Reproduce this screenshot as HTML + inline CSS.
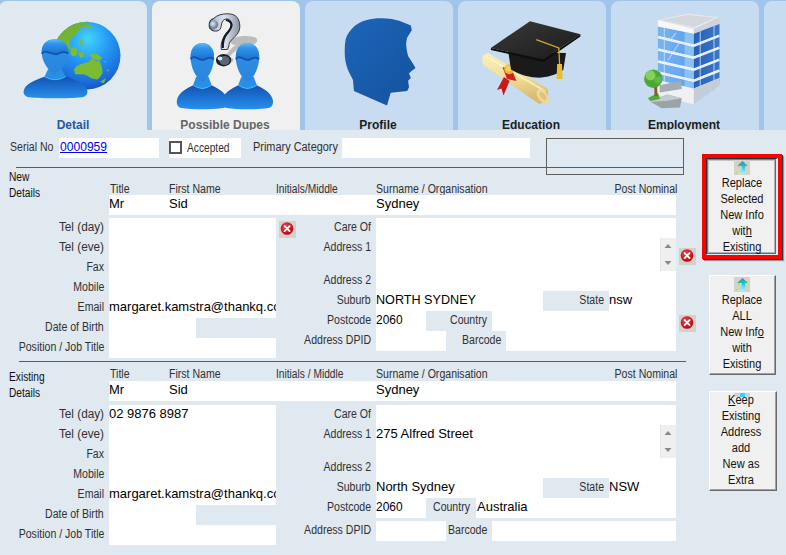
<!DOCTYPE html>
<html><head><meta charset="utf-8"><style>
html,body{margin:0;padding:0;width:786px;height:555px;overflow:hidden;background:#e0e8f0}
.b{position:absolute}
.t{position:absolute;white-space:pre;line-height:20px;font-family:"Liberation Sans",sans-serif}
.l{font-size:12px;color:#303030}
.l2{font-size:12px;color:#111}
.v{font-size:13px;color:#000000}
.tb{font-size:12px;font-weight:bold}
.bt{font-size:12px;color:#111}
.btn{background:#f0f0f0;box-sizing:border-box;border-top:1px solid #fff;border-left:1px solid #fff;border-right:1px solid #696969;border-bottom:1px solid #696969;box-shadow:inset -1px -1px 0 #a0a0a0}
</style></head><body>
<div class="b" style="left:0px;top:0px;width:786px;height:130px;background:#9fc5ea;"></div>
<div class="b" style="left:-1px;top:1px;width:148px;height:129px;background:#e0e8f0;border-radius:8px 8px 0 0"></div>
<div class="b" style="left:152px;top:1px;width:148px;height:129px;background:#f0f0f0;border-radius:8px 8px 0 0"></div>
<div class="b" style="left:305px;top:1px;width:148px;height:129px;background:#c7dcf1;border-radius:8px 8px 0 0"></div>
<div class="b" style="left:458px;top:1px;width:148px;height:129px;background:#c7dcf1;border-radius:8px 8px 0 0"></div>
<div class="b" style="left:611px;top:1px;width:148px;height:129px;background:#c7dcf1;border-radius:8px 8px 0 0"></div>
<div class="b" style="left:764px;top:1px;width:148px;height:129px;background:#c7dcf1;border-radius:8px 8px 0 0"></div>
<svg class="b" style="left:0;top:0" width="786" height="130" viewBox="0 0 786 130">
<defs>
<radialGradient id="globeG" cx="0.5" cy="0.28" r="0.75" fx="0.52" fy="0.25">
<stop offset="0" stop-color="#42d4fc"/><stop offset="0.45" stop-color="#2496f2"/><stop offset="0.85" stop-color="#1a68d8"/><stop offset="1" stop-color="#1450b0"/>
</radialGradient>
<clipPath id="globeC"><circle cx="86.7" cy="55.6" r="33.8"/></clipPath>
<linearGradient id="landG" x1="0" y1="0" x2="0.6" y2="1">
<stop offset="0" stop-color="#5c9e2c"/><stop offset="0.5" stop-color="#72b232"/><stop offset="1" stop-color="#7cbc34"/>
</linearGradient>
<linearGradient id="headG" x1="0" y1="0" x2="0" y2="1">
<stop offset="0" stop-color="#60bdf6"/><stop offset="0.3" stop-color="#2f95ea"/><stop offset="1" stop-color="#1a6fd0"/>
</linearGradient>
<linearGradient id="faceG" x1="0" y1="0" x2="0" y2="1">
<stop offset="0" stop-color="#2c8ee6"/><stop offset="1" stop-color="#2a86dc"/>
</linearGradient>
<linearGradient id="shG" x1="0" y1="0" x2="0" y2="1">
<stop offset="0" stop-color="#1552b0"/><stop offset="0.55" stop-color="#1d74d4"/><stop offset="1" stop-color="#2a90ea"/>
</linearGradient>
<linearGradient id="qG" x1="0" y1="0" x2="1" y2="0">
<stop offset="0" stop-color="#3a4250"/><stop offset="0.2" stop-color="#b8c4d4"/><stop offset="0.5" stop-color="#dfe4ec"/><stop offset="0.75" stop-color="#b4bcc8"/><stop offset="1" stop-color="#8a92a0"/>
</linearGradient>
<linearGradient id="qG2" x1="0" y1="0" x2="1" y2="0.2">
<stop offset="0" stop-color="#e8f0f8"/><stop offset="0.45" stop-color="#d0d6e0"/><stop offset="0.7" stop-color="#a0a8b8"/><stop offset="1" stop-color="#c8ccd6"/>
</linearGradient>
<radialGradient id="qB" cx="0.35" cy="0.4" r="0.6"><stop offset="0" stop-color="#d8f0ff"/><stop offset="1" stop-color="#6a7890"/></radialGradient>
<linearGradient id="profG" x1="0" y1="0" x2="1" y2="1">
<stop offset="0" stop-color="#1d66b8"/><stop offset="1" stop-color="#14519e"/>
</linearGradient>
<linearGradient id="scrollG" x1="0" y1="0" x2="0.25" y2="1">
<stop offset="0" stop-color="#fcf0b8"/><stop offset="0.6" stop-color="#f0dc94"/><stop offset="1" stop-color="#d8bc70"/>
</linearGradient>
<linearGradient id="bldL" x1="0" y1="0" x2="1" y2="0">
<stop offset="0" stop-color="#7ab4ec"/><stop offset="0.5" stop-color="#6aaaf0"/><stop offset="1" stop-color="#5aa0ea"/>
</linearGradient>
<linearGradient id="bldR" x1="0" y1="0" x2="1" y2="0">
<stop offset="0" stop-color="#2860b8"/><stop offset="1" stop-color="#3a78c8"/>
</linearGradient>
<linearGradient id="capG" x1="0" y1="0" x2="1" y2="1">
<stop offset="0" stop-color="#3a3a3a"/><stop offset="1" stop-color="#1a1a1a"/>
</linearGradient>
<path id="sh" d="M-10 37.5 C-17 40 -26 44 -28.5 50 C-30 54 -28 57.5 -24 58 C-12 59.5 12 59.5 24 58 C28 57.5 30 54 28.5 50 C26 44 17 40 10 37.5 Q0 42 -10 37.5 Z" fill="url(#shG)"/>
<g id="hd">
<path d="M-7 30 L7 30 L10.5 37.5 Q0 43.5 -10.5 37.5 Z" fill="#2a8ee6"/>
<path d="M-10.5 37.5 Q0 43.5 10.5 37.5" fill="none" stroke="#3cc4fa" stroke-width="0.9"/>
<path d="M0 0 C7.5 0 13.3 4.5 13.3 12.5 C13.3 22 7.5 31 0 35 C-7.5 31 -13.3 22 -13.3 12.5 C-13.3 4.5 -7.5 0 0 0 Z" fill="url(#faceG)"/>
<path d="M0 0 C7.5 0 13.3 4.5 13.3 12.5 L13.3 14.5 C10 12 6 13 3 14.5 C0 16 -4 14 -7 13 C-10 12 -12 13 -13.3 14.5 L-13.3 12.5 C-13.3 4.5 -7.5 0 0 0 Z" fill="url(#headG)"/>
<path d="M-13.3 14.5 C-12 13 -10 12 -7 13 C-4 14 0 16 3 14.5 C6 13 10 12 13.3 14.5" fill="none" stroke="#1550a8" stroke-width="1.6"/>
</g>
</defs>

<!-- ===== Icon 1: globe + person ===== -->
<circle cx="86.7" cy="55.6" r="33.8" fill="url(#globeG)"/>
<g clip-path="url(#globeC)">
<path d="M40 20 L91 15 L91.5 21.5 L86 23 L82 27.5 L80 28 L78.5 31.5 L74 35.5 L71 38.5 L69.5 43 L70.5 47 L67.3 51.4 L55 56 L40 56 Z" fill="url(#landG)"/>
<path d="M83 26.5 L87 24.5 L92 25 L90 28.5 L86 28 Z M80.5 30 L82.5 29 L82 32 Z" fill="#78b834"/>
<path d="M70.5 48 L75 47 L77.5 50 L77 55 L73 56.5 L70.5 54 Z M78.5 52 L83 52 L84 56.5 L80 58 Z M89.7 54.5 L96 53.6 L102 57.5 L100 60.5 L93 59.5 Z M80 39 L82.5 38.5 L83 45 L81 46 Z M104 61 L106 61 L106 63 Z M107 70 L109 69 L108 72 Z M100 82 L106 78 L104 83 Z" fill="#7cbc34"/>
<path d="M74 69.4 C76 66 79 64.5 81.5 63.9 L89 61.8 L91.1 59.1 L94 60 L97.3 61.8 L98.6 59.1 C101 64 102.5 69 102.7 72.8 C101 76 99 78.5 97.3 79.6 L91.1 78.3 C88 76 86 74.5 83.6 74.2 L75.3 74.2 Z" fill="#7cbc34"/>
<path d="M53 62 A34 34 0 0 0 120 60 A33.8 33.8 0 0 1 53 62 Z" fill="#1450b0" opacity="0.35"/>
</g>
<use href="#sh" transform="translate(55.5 39.2) scale(1.1 1)"/><use href="#hd" transform="translate(55 39.2)"/>

<!-- ===== Icon 2: two persons + question ===== -->
<path d="M231 40 C235 36 246 35 254 37 C259 38.5 258 43 253 44.5 C248 46 243 45 240 47 C236 50 233 53 230 56 L226 55 C229 51 232 47 236 45 C232 45 229 42 231 40 Z M228 58 C231 57 235 58 233 61 C231 63 227 63 228 58 Z" fill="#bcbcbc"/>
<path d="M209.2 24.1 C209.5 20.5 211 19 213.8 18.4 C217 15 222 13.8 227.7 13.8 C232 13.8 235 15 236.9 17.2 C239 19.5 239.8 23 239.8 26.4 C239.8 30 238.5 32.5 236.9 34.5 C235 37 233 38.5 231.1 40.3 C229.8 42 229 44 228.8 46 L227.7 49.5 L221.3 49.5 C221 46 221.2 43.5 221.9 41.4 C222.8 38.5 224 36.5 225.4 34.5 C227 32 229 30.5 230 28.7 C231 26.5 231.5 24.5 231.1 23 C230.5 20.5 229.5 19.3 227.7 19 C225.5 18.8 224 19.5 223 20.7 C222 22 221.5 23.5 221.3 25.3 C221 27.5 220.5 29 219.6 29.9 C218 31 216 31.3 213.8 31 C211 30.3 209.3 28.5 209.2 26.4 Z" fill="url(#qG)" stroke="#202632" stroke-width="0.9"/>
<path d="M226 20 C229 20.5 231 22 231.5 24.5 C232 28 229 31 226.5 34 C224 37 222.5 41 222.8 48" fill="none" stroke="#141820" stroke-width="2.2"/>
<circle cx="214" cy="24.5" r="4.2" fill="url(#qB)"/>
<ellipse cx="223.6" cy="60.2" rx="7.6" ry="6.2" fill="#1a1e28"/><ellipse cx="224.5" cy="60.5" rx="5.2" ry="4.6" fill="#5e6676"/><ellipse cx="220" cy="58.6" rx="2.4" ry="2" fill="#c8e8ff"/>
<use href="#sh" transform="translate(202.3 43.1) scale(0.88 1.12)"/><use href="#hd" transform="translate(202.3 43.1) scale(0.88 1.12)"/>
<use href="#sh" transform="translate(247.5 43.1) scale(0.88 1.12)"/><use href="#hd" transform="translate(247.5 43.1) scale(0.88 1.12)"/>

<!-- ===== Icon 3: profile head ===== -->
<path d="M381.5 18.3 C389 18.5 395 19.5 399.9 21 L410.9 25.6 L411.8 30.2 L407.2 37.6 C406.3 41 406 44 406.3 46.8 C406.8 50 407.2 53 408.1 56 L412.7 63.3 L415.5 67.9 L410.9 71.6 L409 73.4 L410.9 78 L408.1 80.8 L409 87.2 L407.2 90.9 L390.7 92.7 L387 105.6 L353.9 90.9 L353 79.9 C351 76 349 72.5 347.5 68.8 C345.5 63 344.7 58 344.7 52.3 C344.7 47 345 43 345.6 39.4 C347 34.5 349.5 31 352.1 28.4 C356 24.5 361 21.5 366.8 20.1 C371.5 18.8 376.5 18.2 381.5 18.3 Z" fill="url(#profG)"/>
<!-- ===== Icon 4: mortarboard + diploma ===== -->
<path d="M484.9 54.5 C482 55.5 481.8 60 482.5 62 C483.5 65 485 67 486.9 67.3 L538.4 103.5 C541.5 104.5 546.5 101 547.8 96 C548.5 92 548 89.5 547.3 88.6 L488.9 53.5 C487.5 53 486 53.8 484.9 54.5 Z" fill="url(#scrollG)"/>
<path d="M487 57 L545 91" stroke="#fff8d8" stroke-width="2" opacity="0.7"/>
<ellipse cx="542.6" cy="96" rx="5" ry="8" fill="#ecd898" transform="rotate(-35 542.6 96)"/>
<ellipse cx="543" cy="96" rx="2.5" ry="4.5" fill="#e0c47c" transform="rotate(-35 543 96)"/>
<path d="M502.5 67 L512 70 L516.5 81 L507 79 Z" fill="#d42020"/>
<path d="M504 77 L497 90 L501.5 88.5 L503.5 95.5 L509.5 81 Z" fill="#c81818"/>
<circle cx="509.2" cy="69.3" r="5" fill="#e8b838"/>
<circle cx="508.5" cy="68.5" r="3" fill="#f4d060"/>
<path d="M508.3 52 L566 53 L563.3 70 C556 75 546 78 536.3 77.6 C526 77 517 73 511 69.5 Z" fill="#1a1a1a"/>
<path d="M490.9 47.9 L530 21.2 L580.4 34.3 L543.5 59.6 Z" fill="url(#capG)"/>
<path d="M490.9 47.9 L543.5 59.6 L580.4 34.3 L580.4 36.5 L543.5 62 L490.9 50 Z" fill="#0e0e0e"/>
<path d="M536.3 39.7 L558.8 47.9 L559.7 66" fill="none" stroke="#d8a828" stroke-width="1.3"/>
<path d="M557.2 64 L562 64 L562.5 79 L556.5 79 Z" fill="#ecbc30"/>

<!-- ===== Icon 5: building ===== -->
<path d="M657.9 26 L693.8 33.5 L693.8 96 L657.9 88 Z" fill="url(#bldL)"/>
<path d="M693.8 33.5 L719.5 24 L719.5 84 L693.8 96 Z" fill="url(#bldR)"/>
<path d="M684.6 31.5 L693.8 33.5 L693.8 96 L684.6 94 Z" fill="#9cd0f4" opacity="0.7"/>
<g stroke="#cfe4f8" stroke-width="0.9" opacity="0.9">
<path d="M664.3 27.5 L664.3 89"/><path d="M700.2 31 L700.2 93"/><path d="M714 26 L714 87"/>
</g>
<path d="M670 40 L676 33 M668 60 L680 42" stroke="#d8ecff" stroke-width="1.2" opacity="0.6"/>
<g stroke="#f4f8fc" stroke-width="2.6" fill="none">
<path d="M657.9 37 L693.8 45.7 L719.5 35.6"/><path d="M657.9 49.4 L693.8 57.7 L719.5 47.6"/><path d="M657.9 61.4 L693.8 69.6 L719.5 59.6"/><path d="M657.9 72.4 L693.8 80.7 L719.5 70.5"/>
</g>
<g stroke="#6a9ee0" stroke-width="0.6" stroke-dasharray="1.5 1.5" fill="none" opacity="0.5">
<path d="M657.9 37 L693.8 45.7 L719.5 35.6"/><path d="M657.9 49.4 L693.8 57.7 L719.5 47.6"/><path d="M657.9 61.4 L693.8 69.6 L719.5 59.6"/><path d="M657.9 72.4 L693.8 80.7 L719.5 70.5"/>
</g>
<path d="M657.9 80 L693.8 88.5 L719.5 78 L719.5 86 L693.8 104.6 L657.9 95 Z" fill="#eef0f4"/>
<path d="M693.8 88.5 L719.5 78 L719.5 86 L693.8 104.6 Z" fill="#c8ccd4"/>
<path d="M700 92 L700 99 M707 88.5 L707 95.5 M714 85 L714 91" stroke="#a8d4f4" stroke-width="1.6"/>
<path d="M657.9 20 L687.3 13.5 L719.5 17.2 L693.8 29.2 Z" fill="#e4e6ea"/>
<path d="M661 20.3 L687.3 15 L715 17.8 L693.8 27 Z" fill="#d4d8dc"/>
<path d="M657.9 20 L693.8 29.2 L693.8 33.8 L657.9 26.4 Z" fill="#f8f8fa"/>
<path d="M693.8 29.2 L719.5 17.2 L719.5 23 L693.8 33.8 Z" fill="#d0d4da"/>
<path d="M659.7 85.3 L680.9 80.7 L681.8 89 L659.7 92.6 Z" fill="#a4acb4"/>
<path d="M650.5 101.8 L667 94.5 L681.8 98.2 L680 107.4 L661.6 108.3 Z" fill="#9aa2aa"/>
<path d="M650.5 101.8 L667 94.5 L681.8 98.2 L666 101 Z" fill="#c4cad0"/>
<path d="M648 98 L658 93 L660 99 L650 101 Z" fill="#58a838"/>
<path d="M654.2 85 L656.8 85 L657.5 96 L654.5 96 Z" fill="#8a5a28"/>
<circle cx="653.3" cy="78.8" r="9.2" fill="#4aa838"/>
<circle cx="650.5" cy="75.5" r="5" fill="#86d060"/>
<circle cx="658" cy="80" r="3.5" fill="#62b848"/>
</svg>

<div class="t tb" style="left:-27px;width:200px;top:115px;text-align:center;transform-origin:50% 0;color:#2459a6">Detail</div>
<div class="t tb" style="left:125px;width:200px;top:115px;text-align:center;transform-origin:50% 0;color:#666666">Possible Dupes</div>
<div class="t tb" style="left:278px;width:200px;top:115px;text-align:center;transform-origin:50% 0;color:#1c1c1c">Profile</div>
<div class="t tb" style="left:431px;width:200px;top:115px;text-align:center;transform-origin:50% 0;color:#1c1c1c">Education</div>
<div class="t tb" style="left:584px;width:200px;top:115px;text-align:center;transform-origin:50% 0;color:#1c1c1c">Employment</div>
<div class="b" style="left:0px;top:130px;width:786px;height:425px;background:#e0e8f0;"></div>
<div class="t l" style="left:10px;top:137px;transform-origin:0 0;transform:scaleX(0.88);">Serial No</div>
<div class="b" style="left:59px;top:138px;width:100px;height:20px;background:#fff;"></div>
<div class="t v" style="left:60px;top:137px;transform-origin:0 0;transform:scaleX(0.93);color:#0000ee"><u>0000959</u></div>
<div class="b" style="left:169px;top:138px;width:72px;height:20px;background:#fff;"></div>
<div class="b" style="left:169px;top:141px;width:13px;height:13px;border:2px solid #555;box-sizing:border-box;background:#fff"></div>
<div class="t l" style="left:187px;top:138px;transform-origin:0 0;transform:scaleX(0.85);">Accepted</div>
<div class="t l" style="left:253px;top:137px;transform-origin:0 0;transform:scaleX(0.91);">Primary Category</div>
<div class="b" style="left:342px;top:138px;width:188px;height:20px;background:#fff;"></div>
<div class="b" style="left:546px;top:138px;width:138px;height:37px;border:1px solid #5f5f5f;box-sizing:border-box"></div>
<div class="b" style="left:16px;top:167px;width:668px;height:1px;background:#5c5c5c;"></div>
<div class="t l2" style="left:9px;top:167px;transform-origin:0 0;transform:scaleX(0.85);">New</div>
<div class="t l2" style="left:9px;top:183px;transform-origin:0 0;transform:scaleX(0.85);">Details</div>
<div class="t l" style="left:110px;top:179px;transform-origin:0 0;transform:scaleX(0.88);">Title</div>
<div class="t l" style="left:169px;top:179px;transform-origin:0 0;transform:scaleX(0.88);">First Name</div>
<div class="t l" style="left:276px;top:179px;transform-origin:0 0;transform:scaleX(0.85);">Initials/Middle</div>
<div class="t l" style="left:376px;top:179px;transform-origin:0 0;transform:scaleX(0.88);">Surname / Organisation</div>
<div class="t l" style="right:109px;top:179px;text-align:right;transform-origin:100% 0;transform:scaleX(0.88);">Post Nominal</div>
<div class="b" style="left:109px;top:195px;width:567px;height:20px;background:#fff;"></div>
<div class="t v" style="left:109px;top:194px;transform-origin:0 0;">Mr</div>
<div class="t v" style="left:169px;top:194px;transform-origin:0 0;">Sid</div>
<div class="t v" style="left:376px;top:194px;transform-origin:0 0;">Sydney</div>
<div class="b" style="left:109px;top:218px;width:167px;height:140px;background:#fff;"></div>
<div class="b" style="left:196px;top:318px;width:80px;height:20px;background:#e0e8f0;"></div>
<div class="t l" style="right:682px;top:217px;text-align:right;transform-origin:100% 0;transform:scaleX(0.98);">Tel (day)</div>
<div class="t l" style="right:682px;top:237px;text-align:right;transform-origin:100% 0;transform:scaleX(0.98);">Tel (eve)</div>
<div class="t l" style="right:682px;top:257px;text-align:right;transform-origin:100% 0;transform:scaleX(0.88);">Fax</div>
<div class="t l" style="right:682px;top:277px;text-align:right;transform-origin:100% 0;transform:scaleX(0.88);">Mobile</div>
<div class="t l" style="right:682px;top:297px;text-align:right;transform-origin:100% 0;transform:scaleX(0.88);">Email</div>
<div class="t l" style="right:682px;top:317px;text-align:right;transform-origin:100% 0;transform:scaleX(0.88);">Date of Birth</div>
<div class="t l" style="right:682px;top:337px;text-align:right;transform-origin:100% 0;transform:scaleX(0.88);">Position / Job Title</div>
<div class="b" style="left:109px;top:218px;width:167px;height:140px;overflow:hidden"><div class="t v" style="left:0px;top:79px">margaret.kamstra@thankq.com</div></div>
<div class="t l" style="right:415px;top:217px;text-align:right;transform-origin:100% 0;transform:scaleX(0.88);">Care Of</div>
<div class="t l" style="right:415px;top:237px;text-align:right;transform-origin:100% 0;transform:scaleX(0.88);">Address 1</div>
<div class="t l" style="right:415px;top:270px;text-align:right;transform-origin:100% 0;transform:scaleX(0.88);">Address 2</div>
<div class="t l" style="right:415px;top:290px;text-align:right;transform-origin:100% 0;transform:scaleX(0.88);">Suburb</div>
<div class="t l" style="right:415px;top:310px;text-align:right;transform-origin:100% 0;transform:scaleX(0.88);">Postcode</div>
<div class="t l" style="right:415px;top:330px;text-align:right;transform-origin:100% 0;transform:scaleX(0.88);">Address DPID</div>
<div class="b" style="left:376px;top:218px;width:300px;height:133px;background:#fff;"></div>
<div class="b" style="left:543px;top:291px;width:66px;height:20px;background:#e0e8f0;"></div>
<div class="b" style="left:426px;top:311px;width:66px;height:20px;background:#e0e8f0;"></div>
<div class="b" style="left:446px;top:331px;width:60px;height:20px;background:#e0e8f0;"></div>
<div class="t l" style="right:182px;top:290px;text-align:right;transform-origin:100% 0;transform:scaleX(0.88);">State</div>
<div class="t l" style="left:450px;top:310px;transform-origin:0 0;transform:scaleX(0.88);">Country</div>
<div class="t l" style="left:462px;top:330px;transform-origin:0 0;transform:scaleX(0.88);">Barcode</div>
<div class="t v" style="left:376px;top:290px;transform-origin:0 0;transform:scaleX(0.97);">NORTH SYDNEY</div>
<div class="t v" style="left:376px;top:310px;transform-origin:0 0;transform:scaleX(0.92);">2060</div>
<div class="t v" style="left:609px;top:290px;transform-origin:0 0;">nsw</div>
<div class="b" style="left:660px;top:238px;width:16px;height:33px;background:#efefef;border-left:1px solid #e6e6e6;box-sizing:border-box"></div><svg class="b" style="left:660px;top:238px" width="16" height="33" viewBox="0 0 16 33"><path d="M4.5 10 L8 6 L11.5 10 Z" fill="#8a8a8a"/><path d="M4.5 23 L8 27 L11.5 23 Z" fill="#8a8a8a"/></svg>
<div class="b" style="left:279px;top:221px;width:17px;height:17px;background:#d5d1c9"></div><svg class="b" style="left:279px;top:221px" width="17" height="17" viewBox="0 0 17 17"><defs><radialGradient id="rg279221" cx="0.4" cy="0.35" r="0.7"><stop offset="0" stop-color="#f04048"/><stop offset="1" stop-color="#b80010"/></radialGradient></defs><circle cx="8" cy="7.5" r="6.3" fill="url(#rg279221)"/><path d="M5.6 5.1 L10.6 10.1 M10.6 5.1 L5.6 10.1" stroke="#fff" stroke-width="1.9" stroke-linecap="round"/></svg>
<div class="b" style="left:679px;top:248px;width:17px;height:17px;background:#d5d1c9"></div><svg class="b" style="left:679px;top:248px" width="17" height="17" viewBox="0 0 17 17"><defs><radialGradient id="rg679248" cx="0.4" cy="0.35" r="0.7"><stop offset="0" stop-color="#f04048"/><stop offset="1" stop-color="#b80010"/></radialGradient></defs><circle cx="8" cy="7.5" r="6.3" fill="url(#rg679248)"/><path d="M5.6 5.1 L10.6 10.1 M10.6 5.1 L5.6 10.1" stroke="#fff" stroke-width="1.9" stroke-linecap="round"/></svg>
<div class="b" style="left:679px;top:315px;width:17px;height:17px;background:#d5d1c9"></div><svg class="b" style="left:679px;top:315px" width="17" height="17" viewBox="0 0 17 17"><defs><radialGradient id="rg679315" cx="0.4" cy="0.35" r="0.7"><stop offset="0" stop-color="#f04048"/><stop offset="1" stop-color="#b80010"/></radialGradient></defs><circle cx="8" cy="7.5" r="6.3" fill="url(#rg679315)"/><path d="M5.6 5.1 L10.6 10.1 M10.6 5.1 L5.6 10.1" stroke="#fff" stroke-width="1.9" stroke-linecap="round"/></svg>
<div class="b" style="left:19px;top:361px;width:667px;height:1px;background:#5c5c5c;"></div>
<div class="t l2" style="left:9px;top:367px;transform-origin:0 0;transform:scaleX(0.85);">Existing</div>
<div class="t l2" style="left:9px;top:383px;transform-origin:0 0;transform:scaleX(0.85);">Details</div>
<div class="t l" style="left:110px;top:364px;transform-origin:0 0;transform:scaleX(0.88);">Title</div>
<div class="t l" style="left:169px;top:364px;transform-origin:0 0;transform:scaleX(0.88);">First Name</div>
<div class="t l" style="left:276px;top:364px;transform-origin:0 0;transform:scaleX(0.85);">Initials / Middle</div>
<div class="t l" style="left:376px;top:364px;transform-origin:0 0;transform:scaleX(0.88);">Surname / Organisation</div>
<div class="t l" style="right:109px;top:364px;text-align:right;transform-origin:100% 0;transform:scaleX(0.88);">Post Nominal</div>
<div class="b" style="left:109px;top:381px;width:567px;height:20px;background:#fff;"></div>
<div class="t v" style="left:109px;top:380px;transform-origin:0 0;">Mr</div>
<div class="t v" style="left:169px;top:380px;transform-origin:0 0;">Sid</div>
<div class="t v" style="left:376px;top:380px;transform-origin:0 0;">Sydney</div>
<div class="b" style="left:109px;top:405px;width:167px;height:140px;background:#fff;"></div>
<div class="b" style="left:196px;top:505px;width:80px;height:20px;background:#e0e8f0;"></div>
<div class="t l" style="right:682px;top:404px;text-align:right;transform-origin:100% 0;transform:scaleX(0.98);">Tel (day)</div>
<div class="t l" style="right:682px;top:424px;text-align:right;transform-origin:100% 0;transform:scaleX(0.98);">Tel (eve)</div>
<div class="t l" style="right:682px;top:444px;text-align:right;transform-origin:100% 0;transform:scaleX(0.88);">Fax</div>
<div class="t l" style="right:682px;top:464px;text-align:right;transform-origin:100% 0;transform:scaleX(0.88);">Mobile</div>
<div class="t l" style="right:682px;top:484px;text-align:right;transform-origin:100% 0;transform:scaleX(0.88);">Email</div>
<div class="t l" style="right:682px;top:504px;text-align:right;transform-origin:100% 0;transform:scaleX(0.88);">Date of Birth</div>
<div class="t l" style="right:682px;top:524px;text-align:right;transform-origin:100% 0;transform:scaleX(0.88);">Position / Job Title</div>
<div class="b" style="left:109px;top:405px;width:167px;height:140px;overflow:hidden"><div class="t v" style="left:0px;top:79px">margaret.kamstra@thankq.com</div><div class="t v" style="left:0px;top:-1px">02 9876 8987</div></div>
<div class="t l" style="right:415px;top:404px;text-align:right;transform-origin:100% 0;transform:scaleX(0.88);">Care Of</div>
<div class="t l" style="right:415px;top:424px;text-align:right;transform-origin:100% 0;transform:scaleX(0.88);">Address 1</div>
<div class="t l" style="right:415px;top:457px;text-align:right;transform-origin:100% 0;transform:scaleX(0.88);">Address 2</div>
<div class="t l" style="right:415px;top:477px;text-align:right;transform-origin:100% 0;transform:scaleX(0.88);">Suburb</div>
<div class="t l" style="right:415px;top:497px;text-align:right;transform-origin:100% 0;transform:scaleX(0.88);">Postcode</div>
<div class="t l" style="right:415px;top:520px;text-align:right;transform-origin:100% 0;transform:scaleX(0.88);">Address DPID</div>
<div class="b" style="left:376px;top:405px;width:300px;height:113px;background:#fff;"></div>
<div class="b" style="left:543px;top:478px;width:66px;height:20px;background:#e0e8f0;"></div>
<div class="b" style="left:426px;top:498px;width:50px;height:20px;background:#e0e8f0;"></div>
<div class="b" style="left:376px;top:521px;width:70px;height:20px;background:#fff;"></div>
<div class="b" style="left:492px;top:521px;width:184px;height:20px;background:#fff;"></div>
<div class="t l" style="right:182px;top:477px;text-align:right;transform-origin:100% 0;transform:scaleX(0.88);">State</div>
<div class="t l" style="left:433px;top:497px;transform-origin:0 0;transform:scaleX(0.88);">Country</div>
<div class="t l" style="left:448px;top:520px;transform-origin:0 0;transform:scaleX(0.88);">Barcode</div>
<div class="t v" style="left:376px;top:424px;transform-origin:0 0;">275 Alfred Street</div>
<div class="t v" style="left:376px;top:477px;transform-origin:0 0;">North Sydney</div>
<div class="t v" style="left:376px;top:497px;transform-origin:0 0;transform:scaleX(0.92);">2060</div>
<div class="t v" style="left:477px;top:497px;transform-origin:0 0;">Australia</div>
<div class="t v" style="left:609px;top:477px;transform-origin:0 0;">NSW</div>
<div class="b" style="left:660px;top:425px;width:16px;height:33px;background:#efefef;border-left:1px solid #e6e6e6;box-sizing:border-box"></div><svg class="b" style="left:660px;top:425px" width="16" height="33" viewBox="0 0 16 33"><path d="M4.5 10 L8 6 L11.5 10 Z" fill="#8a8a8a"/><path d="M4.5 23 L8 27 L11.5 23 Z" fill="#8a8a8a"/></svg>
<div class="b" style="left:702px;top:154px;width:80px;height:105px;background:#ff0000;box-shadow:1px 1px 0 #2b3b3b,2px 2px 1px rgba(0,0,0,.35)"></div>
<div class="b" style="left:706px;top:158px;width:72px;height:97px;background:#f0f0f0;border-left:1px solid #1e3535;border-top:1px solid #1e3535;border-right:2px solid #d8eef6;border-bottom:1px solid #d8eef6;box-sizing:border-box;box-shadow:inset 1px 1px 0 #7a7f80,inset -1px -1px 0 #6a6a6a,inset 2px 2px 0 #c4c4c4,inset -2px -2px 0 #b0b0b0"></div>
<div class="b" style="left:734px;top:160px;width:16px;height:15px;background:#d6d2ca"></div><svg class="b" style="left:734px;top:160px" width="16" height="15" viewBox="0 0 16 15"><defs><linearGradient id="arG" x1="0" y1="0" x2="0" y2="1"><stop offset="0" stop-color="#4a78ee"/><stop offset="0.35" stop-color="#22c49a"/><stop offset="0.6" stop-color="#3cd8ff"/><stop offset="1" stop-color="#b8f4ff"/></linearGradient></defs><path d="M8.5 1 L14 6 L11.2 6 L11.2 10 C11.2 13 9.5 14.2 6 14.2 C3.5 14.2 2 13.5 2 12.5 C3 13 5 13 6.5 12 C7.5 11.2 7.8 10.5 7.8 9.5 L7.8 6 L3 6 Z" fill="url(#arG)"/><circle cx="3" cy="12.8" r="1" fill="#c8e820"/><circle cx="5" cy="7" r="0.8" fill="#a0e040"/></svg>
<div class="t bt" style="left:642px;width:200px;top:173px;text-align:center;transform-origin:50% 0;transform:scaleX(0.92);">Replace</div>
<div class="t bt" style="left:642px;width:200px;top:189px;text-align:center;transform-origin:50% 0;transform:scaleX(0.92);">Selected</div>
<div class="t bt" style="left:642px;width:200px;top:205px;text-align:center;transform-origin:50% 0;transform:scaleX(0.92);">New Info</div>
<div class="t bt" style="left:642px;width:200px;top:221px;text-align:center;transform-origin:50% 0;transform:scaleX(0.92);">wit<u>h</u></div>
<div class="t bt" style="left:642px;width:200px;top:237px;text-align:center;transform-origin:50% 0;transform:scaleX(0.92);">Existing</div>
<div class="b btn" style="left:709px;top:275px;width:67px;height:100px"></div>
<div class="b" style="left:734px;top:277px;width:16px;height:15px;background:#d6d2ca"></div><svg class="b" style="left:734px;top:277px" width="16" height="15" viewBox="0 0 16 15"><defs><linearGradient id="arG277" x1="0" y1="0" x2="0" y2="1"><stop offset="0" stop-color="#4a78ee"/><stop offset="0.35" stop-color="#22c49a"/><stop offset="0.6" stop-color="#3cd8ff"/><stop offset="1" stop-color="#b8f4ff"/></linearGradient></defs><path d="M8.5 1 L14 6 L11.2 6 L11.2 10 C11.2 13 9.5 14.2 6 14.2 C3.5 14.2 2 13.5 2 12.5 C3 13 5 13 6.5 12 C7.5 11.2 7.8 10.5 7.8 9.5 L7.8 6 L3 6 Z" fill="url(#arG277)"/><circle cx="3" cy="12.8" r="1" fill="#c8e820"/><circle cx="5" cy="7" r="0.8" fill="#a0e040"/></svg>
<div class="t bt" style="left:642px;width:200px;top:290px;text-align:center;transform-origin:50% 0;transform:scaleX(0.92);">Replace</div>
<div class="t bt" style="left:642px;width:200px;top:306px;text-align:center;transform-origin:50% 0;transform:scaleX(0.92);">ALL</div>
<div class="t bt" style="left:642px;width:200px;top:322px;text-align:center;transform-origin:50% 0;transform:scaleX(0.92);">New Inf<u>o</u></div>
<div class="t bt" style="left:642px;width:200px;top:338px;text-align:center;transform-origin:50% 0;transform:scaleX(0.92);">with</div>
<div class="t bt" style="left:642px;width:200px;top:354px;text-align:center;transform-origin:50% 0;transform:scaleX(0.92);">Existing</div>
<div class="b btn" style="left:709px;top:391px;width:68px;height:100px"></div>
<div class="b" style="left:734px;top:393px;width:16px;height:4px;background:#d6d2ca"></div><div class="b" style="left:740px;top:393px;width:5px;height:4px;background:#40d0ff"></div>
<div class="t bt" style="left:641px;width:200px;top:390px;text-align:center;transform-origin:50% 0;transform:scaleX(0.92);"><u>K</u>eep</div>
<div class="t bt" style="left:641px;width:200px;top:406px;text-align:center;transform-origin:50% 0;transform:scaleX(0.92);">Existing</div>
<div class="t bt" style="left:641px;width:200px;top:422px;text-align:center;transform-origin:50% 0;transform:scaleX(0.92);">Address</div>
<div class="t bt" style="left:641px;width:200px;top:438px;text-align:center;transform-origin:50% 0;transform:scaleX(0.92);">add</div>
<div class="t bt" style="left:641px;width:200px;top:454px;text-align:center;transform-origin:50% 0;transform:scaleX(0.92);">New as</div>
<div class="t bt" style="left:641px;width:200px;top:470px;text-align:center;transform-origin:50% 0;transform:scaleX(0.92);">Extra</div>
</body></html>
